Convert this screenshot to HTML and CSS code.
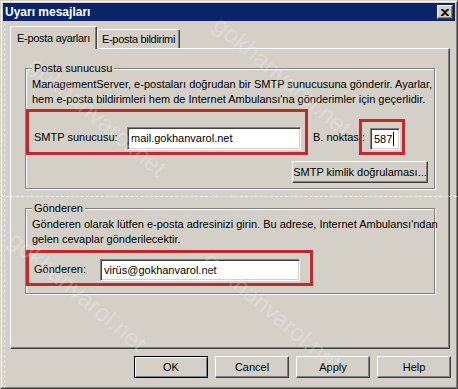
FILE: index.html
```html
<!DOCTYPE html>
<html lang="tr">
<head>
  <meta charset="UTF-8">
  <title>Uyarı mesajları</title>
  <link rel="stylesheet" href="styles.css">
</head>
<body>
  <div class="dialog">
    <!-- Title bar -->
    <div class="titlebar">
      <span class="title">Uyarı mesajları</span>
      <span class="close">
        <svg width="8" height="7" viewBox="0 0 8 7"><path d="M0 0h2l2 2 2-2h2v1L5 3.5 8 6v1H6L4 5 2 7H0V6l3-2.5L0 1z" fill="#000"/></svg>
      </span>
    </div>

    <!-- Tabs -->
    <div class="tabs">
      <div class="tab active">E-posta ayarları</div>
      <div class="tab">E-posta bildirimi</div>
    </div>

    <div class="panel">
      <!-- Mail server -->
      <fieldset class="group group-server">
        <legend>Posta sunucusu</legend>
        <p class="note">ManagementServer, e-postaları doğrudan bir SMTP sunucusuna gönderir. Ayarlar,<br>hem e-posta bildirimleri hem de Internet Ambulansı'na gönderimler için geçerlidir.</p>
        <div class="row">
          <div class="mark mark-host">
            <span class="label label-host">SMTP sunucusu:</span>
            <div class="field field-host">mail.gokhanvarol.net</div>
          </div>
          <span class="label label-port">B. noktası:</span>
          <div class="field field-port">587<span class="caret"></span></div>
          <div class="mark mark-port"></div>
        </div>
        <div class="actions">
          <button class="btn btn-auth">SMTP kimlik doğrulaması...</button>
        </div>
      </fieldset>

      <!-- Sender -->
      <fieldset class="group group-sender">
        <legend>Gönderen</legend>
        <p class="note">Gönderen olarak lütfen e-posta adresinizi girin. Bu adrese, Internet Ambulansı'ndan<br>gelen cevaplar gönderilecektir.</p>
        <div class="mark mark-sender">
          <span class="label label-sender">Gönderen:</span>
          <div class="field field-sender">virüs@gokhanvarol.net</div>
        </div>
      </fieldset>
    </div>

    <!-- Dialog buttons -->
    <div class="footer">
      <button class="btn btn-default">OK</button>
      <button class="btn">Cancel</button>
      <button class="btn">Apply</button>
      <button class="btn">Help</button>
    </div>

    <!-- screenshot overlays -->
    <div class="dash dash-h"></div>
    <div class="dash dash-v"></div>
    <div class="watermarks">
      <span class="wm wm-1">gokhanvarol.net</span>
      <span class="wm wm-2">gokhanvarol.net</span>
      <span class="wm wm-3">gokhanvarol.net</span>
      <span class="wm wm-4">gokhanvarol.net</span>
    </div>
  </div>
</body>
</html>
```

FILE: styles.css
```css
/* General */
body {
  margin: 0;
  font-family: "Liberation Sans", Arial, sans-serif;
  font-size: 11px;
  color: #000;
  background: #d4d0c8;
}

.dialog {
  position: relative;
  width: 458px;
  height: 389px;
  box-sizing: border-box;
  padding: 2px;
  background: #d4d0c8;
  border: 1px solid #d4d0c8;
  border-right-color: #404040;
  border-bottom-color: #404040;
  box-shadow: inset 1px 1px 0 #fff, inset -1px -1px 0 #808080;
  overflow: hidden;
}

/* Title bar */
.titlebar {
  height: 18px;
  display: flex;
  align-items: center;
  justify-content: space-between;
  padding: 0 2px 0 2px;
  background: #0a246a;
}

.title {
  color: #fff;
  font-weight: bold;
  font-size: 12px;
}

.close {
  width: 16px;
  height: 14px;
  display: flex;
  align-items: center;
  justify-content: center;
  box-sizing: border-box;
  background: #d4d0c8;
  border: 1px solid #fff;
  border-right-color: #404040;
  border-bottom-color: #404040;
  box-shadow: inset -1px -1px 0 #808080;
}

/* Tabs */
.tabs {
  height: 27px;
  display: flex;
  align-items: flex-end;
  padding-left: 7px;
  position: relative;
  z-index: 1;
}

.tab {
  width: 83px;
  height: 19px;
  line-height: 18px;
  box-sizing: border-box;
  text-align: center;
  letter-spacing: -0.3px;
  white-space: nowrap;
  border: 1px solid #fff;
  border-bottom: none;
  border-right-color: #404040;
  box-shadow: inset -1px 0 0 #808080;
  border-radius: 2px 2px 0 0;
}

.tab.active {
  width: 87px;
  height: 23px;
  line-height: 22px;
  margin-bottom: -1px;
  background: #d4d0c8;
}

/* Tab panel */
.panel {
  width: 440px;
  height: 301px;
  margin-left: 7px;
  box-sizing: border-box;
  padding: 13px 14px 0 14px;
  border: 1px solid #fff;
  border-right-color: #404040;
  border-bottom-color: #404040;
  box-shadow: inset -1px -1px 0 #808080;
}

/* Group boxes */
.group {
  margin: 0;
  padding: 0;
  min-width: 0;
  border: 1px solid #808080;
  box-shadow: inset 1px 1px 0 #fff, 1px 1px 0 #fff;
}

.group legend {
  margin-left: 6px;
  padding: 0 2px;
  line-height: 13px;
  background: #d4d0c8;
}

.group-server {
  padding-bottom: 5px;
}

.group-sender {
  margin-top: 13px;
  padding-bottom: 7px;
}

.note {
  margin: 2px 0 0 6px;
  line-height: 15px;
  white-space: nowrap;
}

/* Red annotation boxes */
.mark {
  box-sizing: border-box;
  border: 3px solid #be2a2e;
}

.row {
  position: relative;
  display: flex;
  align-items: flex-start;
  margin-top: 2px;
}

.mark-host {
  width: 282px;
  height: 46px;
  display: flex;
  align-items: center;
  padding: 14px 0 1px 5px;
}

.mark-port {
  position: absolute;
  left: 333px;
  top: 10px;
  width: 46px;
  height: 36px;
}

.mark-sender {
  width: 287px;
  height: 36px;
  margin-top: 3px;
  display: flex;
  align-items: center;
  padding: 6px 0 2px 5px;
}

.label {
  line-height: 13px;
  white-space: nowrap;
}

.label-host {
  width: 93px;
  margin-bottom: 3px;
}

.label-port {
  width: 57px;
  margin: 22px 0 0 5px;
  overflow: hidden;
}

.label-sender {
  width: 66px;
  margin-bottom: 2px;
}

/* Edit fields */
.field {
  height: 22px;
  box-sizing: border-box;
  padding-left: 3px;
  line-height: 20px;
  background: #fff;
  border: 1px solid #808080;
  border-right-color: #fff;
  border-bottom-color: #fff;
  box-shadow: inset 1px 1px 0 #404040, inset -1px -1px 0 #d4d0c8;
  white-space: nowrap;
}

.field-host {
  width: 174px;
  height: 23px;
}

.field-port {
  width: 30px;
  margin-top: 19px;
  display: flex;
  align-items: center;
}

.caret {
  width: 0;
  height: 14px;
  margin-left: 1px;
  border-left: 1px solid #000;
}

.field-sender {
  width: 200px;
}

/* Buttons */
.actions {
  margin-top: 6px;
  padding-right: 6px;
  display: flex;
  justify-content: flex-end;
}

.btn {
  height: 22px;
  padding: 0;
  font-family: inherit;
  font-size: 11px;
  color: #000;
  background: #d4d0c8;
  border: 1px solid #fff;
  border-right-color: #404040;
  border-bottom-color: #404040;
  box-shadow: inset -1px -1px 0 #808080;
}

.btn-auth {
  width: 136px;
}

.footer {
  display: flex;
  justify-content: flex-end;
  gap: 7px;
  margin-top: 7px;
  padding-right: 4px;
}

.footer .btn {
  width: 74px;
  height: 22px;
}

.btn-default {
  border: 1px solid #000;
  box-shadow: inset 1px 1px 0 #fff, inset -1px -1px 0 #808080;
}

/* Screenshot overlays */
.dash {
  position: absolute;
  pointer-events: none;
}

.dash-h {
  left: 0;
  right: 0;
  top: 195px;
  border-top: 1px dashed rgba(255, 255, 255, 0.8);
}

.dash-v {
  left: 3px;
  top: 22px;
  bottom: 0;
  border-left: 1px dashed rgba(255, 255, 255, 0.6);
}

.watermarks {
  position: absolute;
  inset: 0;
  pointer-events: none;
  overflow: hidden;
}

.wm {
  position: absolute;
  font-size: 24px;
  color: rgba(255, 255, 255, 0.22);
  transform: rotate(40deg);
  transform-origin: 0 0;
  white-space: nowrap;
}

.wm-1 { left: 225px; top: 10px; }
.wm-2 { left: 40px; top: 50px; }
.wm-3 { left: 20px; top: 225px; }
.wm-4 { left: 215px; top: 245px; }
```
